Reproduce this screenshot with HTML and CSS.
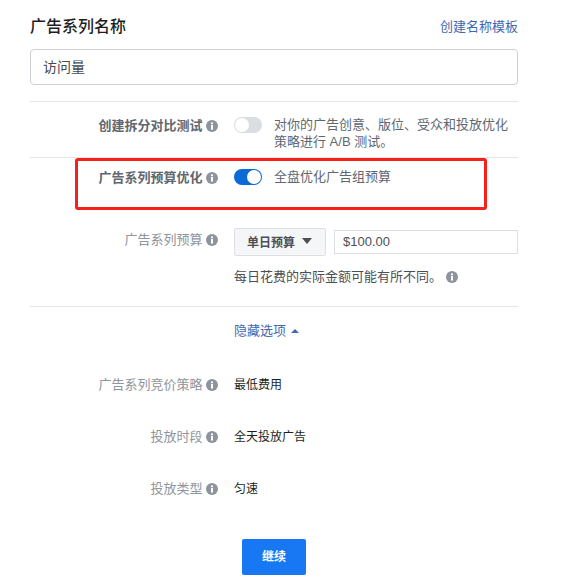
FILE: index.html

```html
<!DOCTYPE html>
<html lang="zh-CN">
<head>
    <meta charset="UTF-8">
    <title>广告系列名称</title>
    <link rel="stylesheet" href="styles.css">
</head>
<body>
    <svg class="icon-defs" width="0" height="0">
        <symbol id="info" viewBox="0 0 12 12">
            <circle cx="6" cy="6" r="6" fill="#8d949e"/>
            <rect x="5" y="5" width="2" height="4.6" fill="#fff"/>
            <rect x="5" y="2.4" width="2" height="1.8" fill="#fff"/>
        </symbol>
    </svg>

    <main class="panel">
        <div class="name-head">
            <h2>广告系列名称</h2>
            <a href="#" class="link">创建名称模板</a>
        </div>
        <div class="name-input">访问量</div>

        <div class="row row-split">
            <div class="label label-strong">创建拆分对比测试 <svg class="info"><use href="#info"/></svg></div>
            <div class="control toggle-line">
                <span class="toggle"></span>
                <p class="toggle-text">对你的广告创意、版位、受众和投放优化策略进行 A/B 测试。</p>
            </div>
        </div>

        <div class="row row-cbo">
            <div class="label label-strong">广告系列预算优化 <svg class="info"><use href="#info"/></svg></div>
            <div class="control toggle-line">
                <span class="toggle toggle-on"></span>
                <p class="toggle-text">全盘优化广告组预算</p>
            </div>
        </div>

        <div class="row row-budget">
            <div class="label">广告系列预算 <svg class="info"><use href="#info"/></svg></div>
            <div class="control">
                <div class="budget-line">
                    <div class="budget-select">单日预算<span class="caret-down"></span></div>
                    <div class="budget-input">$100.00</div>
                </div>
                <p class="budget-note">每日花费的实际金额可能有所不同。<svg class="info"><use href="#info"/></svg></p>
            </div>
        </div>

        <div class="hide-row">
            <a href="#" class="link">隐藏选项<span class="caret-up"></span></a>
        </div>

        <div class="row row-plain">
            <div class="label">广告系列竞价策略 <svg class="info"><use href="#info"/></svg></div>
            <div class="control value">最低费用</div>
        </div>
        <div class="row row-plain">
            <div class="label">投放时段 <svg class="info"><use href="#info"/></svg></div>
            <div class="control value">全天投放广告</div>
        </div>
        <div class="row row-plain">
            <div class="label">投放类型 <svg class="info"><use href="#info"/></svg></div>
            <div class="control value">匀速</div>
        </div>

        <div class="actions">
            <button class="continue">继续</button>
        </div>

        <div class="highlight"></div>
    </main>
</body>
</html>
```

FILE: styles.css

```css
:root {
    --text-color: #1c1e21;
    --muted-color: #90949c;
    --strong-label: #606770;
    --link-color: #4267b2;
    --line-color: #e5e5e5;
}

body {
    margin: 0;
    background-color: #fff;
    color: var(--text-color);
    font-family: "Liberation Sans", "Noto Sans CJK SC", sans-serif;
    font-size: 12px;
}

.icon-defs {
    position: absolute;
}

.panel {
    position: relative;
    width: 488px;
    margin-left: 30px;
    padding-top: 17px;
}

.link {
    color: var(--link-color);
    text-decoration: none;
    font-size: 13px;
}

/* Name section */
.name-head {
    display: flex;
    justify-content: space-between;
    align-items: center;
    height: 20px;
}

.name-head h2 {
    margin: 0;
    font-size: 16px;
    line-height: 20px;
    font-weight: 500;
}

.name-head .link {
    line-height: 20px;
}

.name-input {
    box-sizing: border-box;
    height: 36px;
    margin-top: 12px;
    padding: 0 12px;
    border: 1px solid #ccd0d5;
    border-radius: 4px;
    font-size: 14px;
    line-height: 34px;
    color: #444950;
}

/* Form rows */
.row {
    display: flex;
}

.label {
    width: 188px;
    flex-shrink: 0;
    text-align: right;
    color: var(--muted-color);
    font-size: 13px;
    line-height: 18px;
    white-space: nowrap;
}

.label-strong {
    color: var(--strong-label);
    font-weight: 700;
}

.info {
    width: 12px;
    height: 12px;
    vertical-align: -2px;
}

.control {
    margin-left: 16px;
    flex: 1;
    min-width: 0;
}

.row-split {
    box-sizing: border-box;
    height: 57px;
    margin-top: 16px;
    padding-top: 15px;
    border-top: 1px solid var(--line-color);
    border-bottom: 1px solid var(--line-color);
}

.row-cbo {
    height: 59px;
    padding-top: 11px;
}

.toggle-line {
    display: flex;
    align-items: flex-start;
}

.toggle {
    position: relative;
    flex-shrink: 0;
    width: 28px;
    height: 16px;
    border-radius: 8px;
    background-color: #dadde1;
}

.toggle::after {
    content: "";
    position: absolute;
    top: 1px;
    left: 1px;
    width: 14px;
    height: 14px;
    border-radius: 50%;
    background-color: #fff;
}

.toggle-on {
    background-color: #0a6ad6;
}

.toggle-on::after {
    left: 13px;
}

.toggle-text {
    margin: -1px 0 0 12px;
    line-height: 17px;
    color: #606770;
    font-size: 13px;
}

/* Budget */
.row-budget {
    height: 78px;
    border-bottom: 1px solid var(--line-color);
}

.row-budget .label {
    padding-top: 3px;
}

.budget-line {
    display: flex;
    align-items: center;
}

.budget-select {
    box-sizing: border-box;
    display: flex;
    align-items: center;
    width: 92px;
    height: 28px;
    padding: 0 0 2px 12px;
    border: 1px solid #dddfe2;
    border-radius: 2px;
    background-color: #f5f6f7;
    color: #4b4f56;
    font-weight: 700;
}

.caret-down {
    margin-left: 7px;
    border-style: solid;
    border-width: 6px 5px 0;
    border-color: #4b4f56 transparent transparent;
}

.budget-input {
    box-sizing: border-box;
    flex: 1;
    height: 24px;
    margin-left: 8px;
    padding-left: 8px;
    border: 1px solid #dddfe2;
    font-size: 13px;
    line-height: 22px;
    color: #4b4f56;
}

.budget-note {
    margin: 12px 0 0;
    font-size: 13px;
    line-height: 18px;
    color: #4b4f56;
}

.budget-note .info {
    margin-left: 4px;
}

/* Hide options */
.hide-row {
    padding: 15px 0 0 204px;
    line-height: 18px;
    height: 54px;
}

.caret-up {
    display: inline-block;
    margin-left: 5px;
    vertical-align: 2px;
    border-style: solid;
    border-width: 0 4px 4px;
    border-color: transparent transparent var(--link-color);
}

.row-plain {
    height: 52px;
}

.value {
    line-height: 18px;
    color: var(--text-color);
}

.actions {
    padding-left: 212px;
    margin-top: 7px;
}

.continue {
    display: block;
    width: 64px;
    height: 36px;
    padding: 0 0 3px;
    border: none;
    border-radius: 2px;
    background-color: #1877f2;
    color: #fff;
    font-family: inherit;
    font-size: 12px;
    font-weight: 700;
}

/* Red annotation drawn over the form */
.highlight {
    position: absolute;
    left: 45px;
    top: 158px;
    width: 412px;
    height: 52px;
    box-sizing: border-box;
    border: 3px solid #f5211a;
    border-radius: 3px;
}
```
